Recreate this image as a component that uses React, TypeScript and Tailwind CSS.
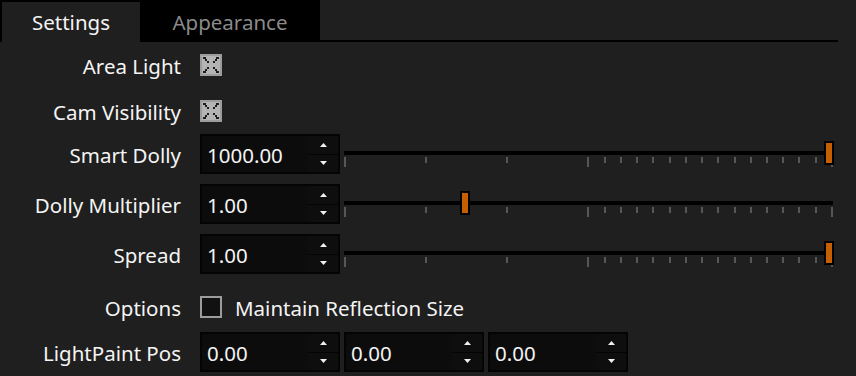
import React from 'react';

const font = { fontFamily: '"Noto Sans", "Open Sans", sans-serif' };

const Spin = ({ value }: { value: string }) => (
  <div className="flex h-[40px] w-[140px] bg-[#040404] p-[2px]">
    <div className="flex flex-1 items-center bg-[#0c0c0c] pl-[5px] pt-[2px] text-[20.5px] text-[#f4f4f4]">{value}</div>
    <div className="flex w-[30px] flex-col gap-[1px] bg-[#040404]">
      <div className="flex flex-1 items-center justify-center bg-[#0e0e0e]">
        <svg width="7" height="4" viewBox="0 0 7 4"><path d="M3.5 0 L7 4 L0 4 Z" fill="#f0f0f0" /></svg>
      </div>
      <div className="flex flex-1 items-center justify-center bg-[#0e0e0e]">
        <svg width="7" height="4" viewBox="0 0 7 4"><path d="M0 0 L7 0 L3.5 4 Z" fill="#f0f0f0" /></svg>
      </div>
    </div>
  </div>
);

const ticks = [0, 5, 10, 15, 16, 17, 18, 19, 20, 21, 22, 23, 24, 25, 26, 27, 28, 29, 30];

const Slider = ({ pos }: { pos: number }) => (
  <svg width="492" height="40" className="ml-[3px] shrink-0">
    <rect x="1" y="17" width="489" height="4" fill="#000" />
    {ticks.map(k => {
      const tall = k === 0 || k === 15 || k === 30;
      return <rect key={k} x={Math.round(1 + 16.23 * k)} y="23" width="2" height={tall ? 10 : 6} fill="#565656" />;
    })}
    <rect x={pos} y="7" width="10" height="24" fill="#000" />
    <rect x={pos + 2} y="9" width="6" height="20" fill="#c65f00" />
  </svg>
);

const Checked = () => (
  <svg width="22" height="22" viewBox="0 0 22 22">
    <rect x="0" y="0" width="22" height="22" fill="#9c9c9c" />
    <rect x="2" y="2" width="18" height="18" fill="#b4b4b4" />
    {[[3, 3], [5, 5], [7, 7], [17, 3], [15, 5], [13, 7], [3, 17], [5, 15], [7, 13], [17, 17], [15, 15], [13, 13]].map(([x, y], i) => (
      <rect key={i} x={x} y={y} width="2" height="2" fill="#1c1c1c" />
    ))}
    <rect x="3" y="3" width="3" height="2" fill="#1c1c1c" />
    <rect x="16" y="3" width="3" height="2" fill="#1c1c1c" />
    <rect x="3" y="17" width="3" height="2" fill="#1c1c1c" />
    <rect x="16" y="17" width="3" height="2" fill="#1c1c1c" />
  </svg>
);

const Unchecked = () => <div className="h-[22px] w-[22px] border-2 border-[#9c9c9c] bg-[#111]" />;

const Row = ({ label, className, children }: { label: string; className?: string; children: React.ReactNode }) => (
  <div className={`flex items-center ${className ?? ''}`}>
    <div className="w-[181px] shrink-0 pt-[2px] text-right text-[20.5px] text-[#f4f4f4]">{label}</div>
    <div className="ml-[19px] flex items-center">{children}</div>
  </div>
);

export default function App() {
  return (
    <div className="h-[376px] w-[856px] overflow-hidden bg-[#1f1f1f]" style={font}>
      <div className="flex h-[42px]">
        <div className="flex h-[42px] w-[320px] bg-black pl-[2px] pt-[2px]">
          <div className="flex h-[40px] w-[138px] items-center justify-center bg-[#1f1f1f] text-[20.5px] text-[#f4f4f4]">Settings</div>
          <div className="flex h-[40px] flex-1 items-center justify-center text-[20.5px] text-[#8a8a8a]">Appearance</div>
        </div>
        <div className="flex w-[518px] flex-col justify-end">
          <div className="h-[2px] bg-black" />
        </div>
      </div>
      <div className="flex flex-col pt-[12px]">
        <Row label="Area Light" className="h-[22px]"><Checked /></Row>
        <Row label="Cam Visibility" className="mt-[24px] h-[22px]"><Checked /></Row>
        <Row label="Smart Dolly" className="mt-[12px] h-[40px]"><Spin value="1000.00" /><Slider pos={481} /></Row>
        <Row label="Dolly Multiplier" className="mt-[10px] h-[40px]"><Spin value="1.00" /><Slider pos={117} /></Row>
        <Row label="Spread" className="mt-[10px] h-[40px]"><Spin value="1.00" /><Slider pos={481} /></Row>
        <Row label="Options" className="mt-[22px] h-[22px]">
          <Unchecked />
          <span className="ml-[13px] pt-[2px] text-[20.5px] text-[#f4f4f4]">Maintain Reflection Size</span>
        </Row>
        <Row label="LightPaint Pos" className="mt-[14px] h-[40px]">
          <div className="flex gap-[4px]">
            <Spin value="0.00" />
            <Spin value="0.00" />
            <Spin value="0.00" />
          </div>
        </Row>
      </div>
    </div>
  );
}
